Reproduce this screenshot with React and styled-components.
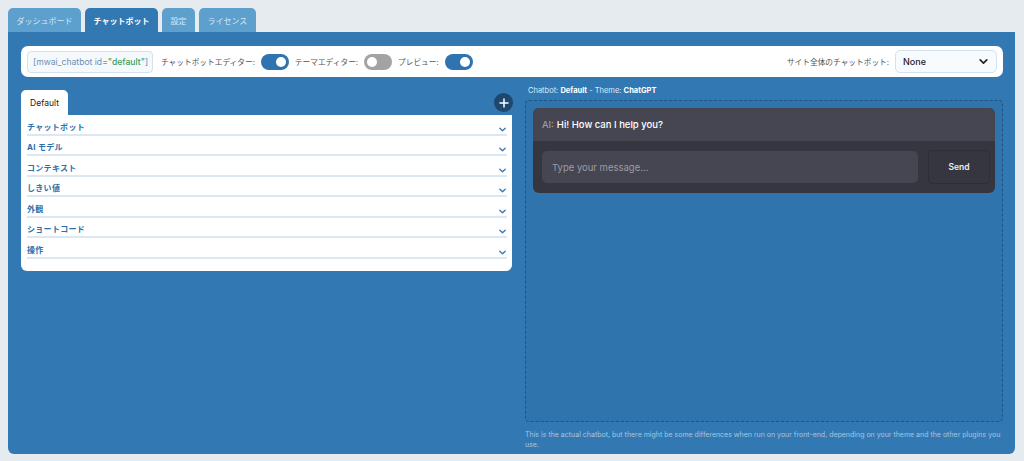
import React from "react";
import styled, { createGlobalStyle } from "styled-components";

const GlobalStyle = createGlobalStyle`
  html, body {
    margin: 0;
    padding: 0;
    background: #e6ebf0;
    font-family: Inter, "Noto Sans CJK JP", sans-serif;
  }
  * { box-sizing: border-box; }
`;

const Page = styled.div`
  padding: 8px 9px 7px 8px;
  height: 461px;
`;

const Tabs = styled.div`
  display: flex;
  gap: 4px;
`;

const Tab = styled.div`
  height: 24px;
  padding: 0 8.5px;
  display: flex;
  align-items: center;
  border-radius: 5px 5px 0 0;
  font-size: 8px;
  font-weight: ${(p) => (p.$active ? 700 : 400)};
  color: ${(p) => (p.$active ? "#ffffff" : "#d4e7f5")};
  background: ${(p) => (p.$active ? "#3279b4" : "#5d9fcd")};
`;

const Panel = styled.div`
  background: #3279b4;
  border-radius: 0 0 6px 6px;
  padding: 14px 12px 6px 13px;
  height: 422px;
`;

const Toolbar = styled.div`
  background: #fff;
  border-radius: 7px;
  height: 31px;
  display: flex;
  align-items: center;
  padding: 0 6px;
  gap: 6px;
`;

const Shortcode = styled.div`
  border: 1px solid #d2e2ef;
  background: #f6f9fc;
  border-radius: 4px;
  height: 22px;
  width: 126px;
  padding: 0 5px;
  display: flex;
  align-items: center;
  font-size: 8.6px;
  color: #6a8fb5;
  white-space: nowrap;
  margin-right: 2px;
  b {
    color: #3a9e5c;
    font-weight: 500;
  }
`;

const Label = styled.span`
  font-size: 7.7px;
  color: #555;
  white-space: nowrap;
`;

const Switch = styled.div`
  width: 28px;
  height: 16px;
  border-radius: 8px;
  background: ${(p) => (p.$on ? "#2f74b0" : "#a3a3a3")};
  position: relative;
  &::after {
    content: "";
    position: absolute;
    top: 3px;
    left: ${(p) => (p.$on ? "15px" : "3px")};
    width: 10px;
    height: 10px;
    border-radius: 50%;
    background: #fff;
  }
`;

const Spacer = styled.div`
  flex: 1;
`;

const Select = styled.div`
  width: 102px;
  height: 23px;
  border: 1px solid #d2e2ef;
  background: #f7fbfe;
  border-radius: 5px;
  display: flex;
  align-items: center;
  justify-content: space-between;
  padding: 0 7px;
  font-size: 9px;
  color: #222;
  font-weight: 500;
`;

const Columns = styled.div`
  display: grid;
  grid-template-columns: 491px 1fr;
  gap: 13px;
  margin-top: 9px;
  align-items: start;
`;

const LeftCol = styled.div`
  display: flex;
  flex-direction: column;
`;

const LeftHead = styled.div`
  display: flex;
  align-items: flex-end;
  justify-content: space-between;
  margin-top: 4px;
`;

const ChatTab = styled.div`
  background: #fff;
  border-radius: 5px 5px 0 0;
  height: 25px;
  width: 47px;
  display: flex;
  align-items: center;
  justify-content: center;
  font-size: 8.5px;
  color: #222;
`;

const AddButton = styled.div`
  width: 19px;
  height: 19px;
  border-radius: 50%;
  background: #1d476c;
  color: #fff;
  display: flex;
  align-items: center;
  justify-content: center;
  margin-bottom: 3px;
  margin-right: -1px;
`;

const Card = styled.div`
  background: #fff;
  border-radius: 0 0 6px 6px;
  padding: 0 5px 12px 6px;
`;

const Row = styled.div`
  height: 20.5px;
  display: flex;
  align-items: flex-end;
  justify-content: space-between;
  border-bottom: 2px solid #dbe7f2;
  font-size: 8px;
  font-weight: 700;
  color: #2f6fa8;
  letter-spacing: 0.3px;
  padding-bottom: 2px;
  line-height: 10px;
  svg {
    margin-bottom: -2px;
  }
`;

const RightCol = styled.div`
  display: flex;
  flex-direction: column;
`;

const Caption = styled.div`
  font-size: 7.5px;
  color: #dbe9f5;
  padding-left: 3px;
  height: 14px;
  b {
    color: #fff;
    font-weight: 700;
  }
`;

const Preview = styled.div`
  border: 1px dashed #1f5584;
  border-radius: 4px;
  background: #2f74ad;
  height: 322px;
  padding: 7px;
`;

const ChatBox = styled.div`
  background: #363641;
  border-radius: 6px;
  overflow: hidden;
`;

const Message = styled.div`
  background: #454652;
  height: 33px;
  display: flex;
  align-items: center;
  padding: 0 9px;
  font-size: 9.5px;
  color: #fff;
  font-weight: 500;
  span {
    color: #a9a9b3;
    font-weight: 400;
    margin-right: 3px;
  }
`;

const InputRow = styled.div`
  display: flex;
  gap: 10px;
  padding: 9px 5px 9px 9px;
  align-items: center;
`;

const Input = styled.div`
  flex: 1;
  height: 32px;
  background: #454652;
  border-radius: 5px;
  display: flex;
  align-items: center;
  padding: 0 10px;
  font-size: 9.5px;
  color: #9c9ca6;
`;

const SendButton = styled.div`
  width: 62px;
  height: 34px;
  border: 1px solid #2e2e38;
  border-radius: 4px;
  background: #363641;
  display: flex;
  align-items: center;
  justify-content: center;
  font-size: 8.5px;
  font-weight: 600;
  color: #eee;
`;

const Note = styled.div`
  font-size: 7px;
  color: #a7c5df;
  line-height: 10px;
  padding: 8px 0 0 0;
`;

const Chevron = ({ size = 10, color = "#3b7ab3" }) => (
  <svg width={size} height={size} viewBox="0 0 10 10">
    <path d="M2 3.5 L5 6.5 L8 3.5" fill="none" stroke={color} strokeWidth="1.5" strokeLinecap="round" strokeLinejoin="round" />
  </svg>
);

const sections = ["チャットボット", "AI モデル", "コンテキスト", "しきい値", "外観", "ショートコード", "操作"];

export default function App() {
  return (
    <Page>
      <GlobalStyle />
      <Tabs>
        <Tab>ダッシュボード</Tab>
        <Tab $active>チャットボット</Tab>
        <Tab>設定</Tab>
        <Tab>ライセンス</Tab>
      </Tabs>
      <Panel>
        <Toolbar>
          <Shortcode>
            [mwai_chatbot id=<b>"default"</b>]
          </Shortcode>
          <Label>チャットボットエディター:</Label>
          <Switch $on />
          <Label>テーマエディター:</Label>
          <Switch />
          <Label>プレビュー:</Label>
          <Switch $on />
          <Spacer />
          <Label>サイト全体のチャットボット:</Label>
          <Select>
            None
            <Chevron size={11} color="#222" />
          </Select>
        </Toolbar>
        <Columns>
          <LeftCol>
            <LeftHead>
              <ChatTab>Default</ChatTab>
              <AddButton>
                <svg width="10" height="10" viewBox="0 0 10 10">
                  <path d="M5 1 V9 M1 5 H9" stroke="#fff" strokeWidth="1.5" strokeLinecap="round" />
                </svg>
              </AddButton>
            </LeftHead>
            <Card>
              {sections.map((s) => (
                <Row key={s}>
                  {s}
                  <Chevron size={9} />
                </Row>
              ))}
            </Card>
          </LeftCol>
          <RightCol>
            <Caption>
              Chatbot: <b>Default</b> - Theme: <b>ChatGPT</b>
            </Caption>
            <Preview>
              <ChatBox>
                <Message>
                  <span>AI:</span> Hi! How can I help you?
                </Message>
                <InputRow>
                  <Input>Type your message...</Input>
                  <SendButton>Send</SendButton>
                </InputRow>
              </ChatBox>
            </Preview>
            <Note>
              This is the actual chatbot, but there might be some differences when run on your front-end, depending on your theme and the other plugins you use.
            </Note>
          </RightCol>
        </Columns>
      </Panel>
    </Page>
  );
}
